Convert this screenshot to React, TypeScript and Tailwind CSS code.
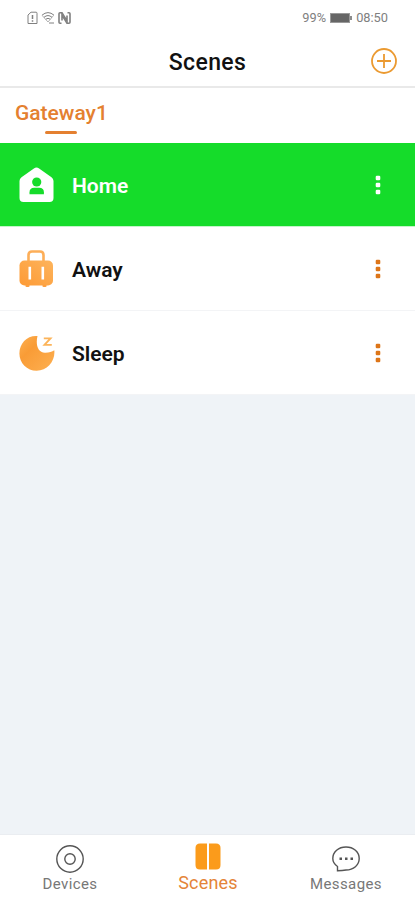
import type { ReactNode } from 'react'

interface Scene {
  name: string
  icon: ReactNode
  active?: boolean
}

function HomeIcon() {
  return (
    <svg width="36" height="36" viewBox="0 0 36 36">
      <path
        d="M15.9 1.6 Q18.5 -0.6 21.1 1.6 L33.5 10.3 Q35.5 11.8 35.5 14 V31 Q35.5 35 31.5 35 H5.5 Q1.5 35 1.5 31 V14 Q1.5 11.8 3.5 10.3 Z"
        fill="#fff"
      />
      <circle cx="18.7" cy="15" r="4.6" fill="#15dc2a" />
      <path d="M11.5 27.2 V25.3 Q11.5 20.8 16.2 20.8 H21.2 Q25.9 20.8 25.9 25.3 V27.2 Z" fill="#15dc2a" />
    </svg>
  )
}

function AwayIcon() {
  return (
    <svg width="36" height="38" viewBox="0 0 36 38">
      <defs>
        <linearGradient id="bag" x1="0" y1="1" x2="1" y2="0">
          <stop offset="0" stopColor="#fd9a35" />
          <stop offset="1" stopColor="#fdb45c" />
        </linearGradient>
      </defs>
      <path d="M10.5 12 V5 Q10.500 1.500 14 1.500 H22 Q25.500 1.500 25.500 5 V12" fill="none" stroke="#fdae58" strokeWidth="2.600" />
      <rect x="1.500" y="10.500" width="33.500" height="25" rx="5" fill="url(#bag)" />
      <path d="M7.500 35 h4 v1.500 q-2 1.200 -4 0 Z M24.500 35 h4 v1.500 q-2 1.200 -4 0 Z" fill="#fd9f3f" />
      <path d="M11.800 16.800 V29.500 M24.800 16.800 V29.500" stroke="#fff" strokeWidth="2.600" />
    </svg>
  )
}

function SleepIcon() {
  return (
    <svg width="37" height="36" viewBox="0 0 37 36">
      <defs>
        <linearGradient id="moon" x1="0" y1="0" x2="1" y2="1">
          <stop offset="0" stopColor="#fdb052" />
          <stop offset="0.35" stopColor="#f99c36" />
          <stop offset="1" stopColor="#fdb052" />
        </linearGradient>
      </defs>
      <path
        d="M18 1 H19.500 C17.500 9 19.500 17.500 27 17.700 C31 17.800 34 16.500 36.300 15.200 C37.500 26 29.500 35.700 18.600 35.700 C9 35.700 1.400 28 1.400 18.400 C1.400 8.800 8.500 1 18 1 Z"
        fill="url(#moon)"
      />
      <path d="M25.800 3.400 H32.500 L26.500 9.900 H33.800" fill="none" stroke="#fcb45a" strokeWidth="1.900" />
    </svg>
  )
}

const SCENES: Scene[] = [
  { name: 'Home', icon: <HomeIcon />, active: true },
  { name: 'Away', icon: <AwayIcon /> },
  { name: 'Sleep', icon: <SleepIcon /> },
]

function StatusBar() {
  return (
    <div className="flex h-9 items-center justify-between pl-[27px] pr-[27px] text-[#808080]">
      <div className="flex items-center gap-[3px]">
        {/* sim card */}
        <svg width="11" height="14" viewBox="0 0 11 14" fill="none" stroke="currentColor">
          <path d="M1 12.500 V4 L4 1.200 H9 Q10 1.200 10 2.200 V12.500 Z" />
          <path d="M5.500 4 V8 M5.500 9.300 V10.700" strokeWidth="1.500" />
        </svg>
        {/* wifi */}
        <svg width="14" height="14" viewBox="0 0 14 14" fill="none" stroke="currentColor">
          <path d="M1 4.200 Q7 -1 13 4.200 M3 6.300 Q7 2.800 11 6.300 M4.800 8.200 Q7 6.400 9.200 8.200" />
          <path d="M1.200 4.500 L7 11 L12.500 4.500" strokeWidth="0.600" />
          <path d="M8 12 H13" />
        </svg>
        {/* nfc */}
        <svg width="13" height="14" viewBox="0 0 13 14" fill="none" stroke="currentColor">
          <path d="M3.500 12.300 H2 Q1 12.300 1 11.300 V2.800 Q1 1.800 2 1.800 H4 L9 10 V4.500" strokeWidth="1.600" />
          <path d="M9.500 1.800 H11 Q12 1.800 12 2.800 V11.300 Q12 12.300 11 12.300 H9 L4 4 V9.500" strokeWidth="1.600" />
        </svg>
      </div>
      <div className="flex items-center gap-1 text-[12.8px] leading-none">
        <span>99%</span>
        <svg width="22" height="10" viewBox="0 0 22 10">
          <rect x="0.500" y="0.500" width="19" height="9" fill="#666" stroke="#999" />
          <path d="M21 3 V7" stroke="#666" strokeWidth="1.500" />
        </svg>
        <span>08:50</span>
      </div>
    </div>
  )
}

function SceneRow({ scene }: { scene: Scene }) {
  return (
    <div
      className={
        scene.active
          ? 'flex h-[84px] items-center border-b border-[#c4f5ca] bg-[#15dc2a] pl-[18px] pr-[34px] pt-px text-white'
          : 'flex h-[84px] items-center border-b border-[#f3f4f6] bg-white pl-[18px] pr-[34px] pt-px text-[#111]'
      }
    >
      <span className="w-9">{scene.icon}</span>
      <span className="ml-[18px] flex-1 pt-[3px] text-[21px] font-semibold leading-none">{scene.name}</span>
      <button aria-label="More" className={scene.active ? 'text-white' : 'text-[#dd7518]'}>
        <svg width="6" height="20" viewBox="0 0 6 20" fill="currentColor">
          <rect x="0.700" y="0.700" width="4.600" height="4.600" rx="1.200" />
          <rect x="0.700" y="7.700" width="4.600" height="4.600" rx="1.200" />
          <rect x="0.700" y="14.700" width="4.600" height="4.600" rx="1.200" />
        </svg>
      </button>
    </div>
  )
}

function TabBar() {
  return (
    <nav className="grid h-[66px] grid-cols-3 border-t border-[#eaedf1] bg-white pl-px pt-2 text-[15px] leading-none text-[#777]">
      <a className="flex flex-col items-center">
        <svg className="mt-px" width="30" height="30" viewBox="0 0 30 30" fill="none" stroke="#555" strokeWidth="1.400">
          <circle cx="15" cy="15" r="13.200" />
          <circle cx="15" cy="15" r="5.200" />
        </svg>
        <span className="mt-[3px] tracking-[0.4px]">Devices</span>
      </a>
      <a className="flex flex-col items-center text-[#e48438]">
        <svg width="26" height="27" viewBox="0 0 26 27" fill="#fb9b1b">
          <path d="M5 0.500 H12 V26.500 H5 Q0.500 26.500 0.500 22 V5 Q0.500 0.500 5 0.500 Z" />
          <path d="M14 0.500 H21 Q25.500 0.500 25.500 5 V22 Q25.500 26.500 21 26.500 H14 Z" />
        </svg>
        <span className="mt-[4px] text-[18px] tracking-[0.2px]">Scenes</span>
      </a>
      <a className="flex flex-col items-center">
        <svg className="mt-px" width="30" height="30" viewBox="0 0 30 30" fill="none" stroke="#555" strokeWidth="1.400">
          <path d="M6.500 26.700 V22.500 C3.500 20.300 1.800 17.800 1.800 14.500 C1.800 8 7.500 3 15 3 C22.500 3 28.200 8 28.200 14.500 C28.200 21 22.500 26 15 26 C12.500 26.500 9.500 26.700 6.500 26.700 Z" />
          <path d="M8.500 14.700 H11 M14 14.700 H16.500 M19.500 14.700 H22" strokeWidth="2.500" />
        </svg>
        <span className="mt-[3px] tracking-[0.4px]">Messages</span>
      </a>
    </nav>
  )
}

export default function App() {
  return (
    <div className="flex h-screen w-full flex-col overflow-hidden bg-[#eff3f7] font-['Roboto',sans-serif]">
      <div className="bg-white">
        <StatusBar />
        <header className="grid h-[52px] grid-cols-[1fr_auto_1fr] items-center border-b-2 border-[#e9e9e9] pr-[18px]">
          <h1 className="col-start-2 ml-[18px] pt-[2px] text-[23px] font-medium leading-none tracking-[0.4px] text-[#111]">Scenes</h1>
          <button aria-label="Add scene" className="justify-self-end">
            <svg width="26" height="26" viewBox="0 0 26 26" fill="none" stroke="#eb9a31" strokeWidth="1.800">
              <circle cx="13" cy="13" r="12" />
              <path d="M13 6 V20 M6 13 H20" />
            </svg>
          </button>
        </header>
        <div className="flex h-[55px] pl-[15px] pt-[14px]">
          <div className="flex flex-col items-center">
            <span className="text-[21px] font-medium leading-[22px] text-[#e48030]">Gateway1</span>
            <span className="mt-[7px] h-[3px] w-8 rounded-full bg-[#e48030]" />
          </div>
        </div>
      </div>

      <main className="flex-1">
        {SCENES.map(s => (
          <SceneRow key={s.name} scene={s} />
        ))}
      </main>

      <TabBar />
    </div>
  )
}
